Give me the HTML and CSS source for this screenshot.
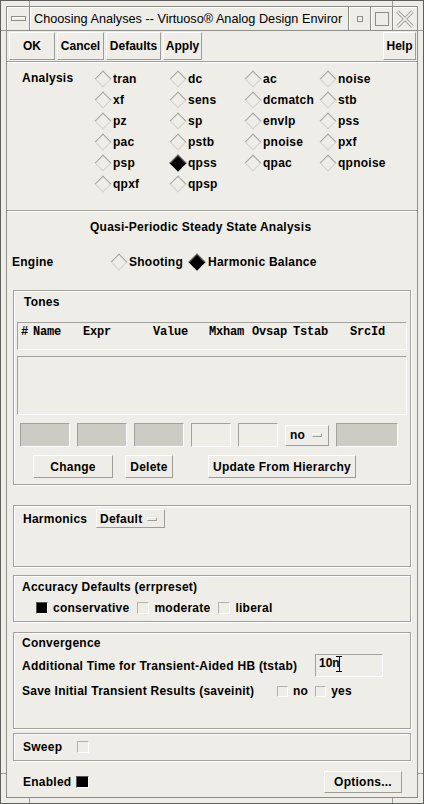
FILE: index.html
```html
<!DOCTYPE html>
<html>
<head>
<meta charset="utf-8">
<title>Choosing Analyses</title>
<link rel="stylesheet" href="styles.css">
</head>
<body>
<div class="window">
  <span class="mark mark-v m-tl"></span>
  <span class="mark mark-v m-tr"></span>
  <span class="mark mark-v m-bl"></span>
  <span class="mark mark-v m-br"></span>
  <span class="mark mark-h m-lt"></span>
  <span class="mark mark-h m-rt"></span>
  <span class="mark mark-h m-lb"></span>
  <span class="mark mark-h m-rb"></span>
  <div class="frame">
    <div class="titlebar">
      <div class="tb tb-menu"><span class="menu-bar"></span></div>
      <div class="tb tb-title">Choosing Analyses -- Virtuoso® Analog Design Enviror</div>
      <div class="tb tb-min"><span class="min-box"></span></div>
      <div class="tb tb-max"><span class="max-box"></span></div>
      <div class="tb tb-close">
        <svg width="18" height="18" viewBox="0 0 18 18">
          <path d="M1.5 1.5 L16.5 16.5 M16.5 1.5 L1.5 16.5" stroke="#a3a39e" stroke-width="3.6" fill="none"/>
          <path d="M1.5 1.5 L16.5 16.5 M16.5 1.5 L1.5 16.5" stroke="#f4f3ee" stroke-width="1.6" fill="none"/>
        </svg>
      </div>
    </div>
    <div class="client">
      <div class="actions">
        <div class="btn w-ok">OK</div>
        <div class="btn w-cancel">Cancel</div>
        <div class="btn w-defaults">Defaults</div>
        <div class="btn w-apply">Apply</div>
        <div class="btn w-help">Help</div>
      </div>

      <div class="analysis">
        <div class="an-label">Analysis</div>
        <div class="radio"><span class="dia"></span>tran</div>
        <div class="radio"><span class="dia"></span>dc</div>
        <div class="radio"><span class="dia"></span>ac</div>
        <div class="radio"><span class="dia"></span>noise</div>
        <div class="radio"><span class="dia"></span>xf</div>
        <div class="radio"><span class="dia"></span>sens</div>
        <div class="radio"><span class="dia"></span>dcmatch</div>
        <div class="radio"><span class="dia"></span>stb</div>
        <div class="radio"><span class="dia"></span>pz</div>
        <div class="radio"><span class="dia"></span>sp</div>
        <div class="radio"><span class="dia"></span>envlp</div>
        <div class="radio"><span class="dia"></span>pss</div>
        <div class="radio"><span class="dia"></span>pac</div>
        <div class="radio"><span class="dia"></span>pstb</div>
        <div class="radio"><span class="dia"></span>pnoise</div>
        <div class="radio"><span class="dia"></span>pxf</div>
        <div class="radio"><span class="dia"></span>psp</div>
        <div class="radio"><span class="dia on"></span>qpss</div>
        <div class="radio"><span class="dia"></span>qpac</div>
        <div class="radio"><span class="dia"></span>qpnoise</div>
        <div class="radio"><span class="dia"></span>qpxf</div>
        <div class="radio"><span class="dia"></span>qpsp</div>
      </div>

      <div class="qp">
        <div class="qp-title">Quasi-Periodic Steady State Analysis</div>

        <div class="engine">
          <div class="engine-label">Engine</div>
          <div class="radio"><span class="dia"></span>Shooting</div>
          <div class="radio radio-next"><span class="dia on"></span>Harmonic Balance</div>
        </div>

        <div class="group tones">
          <div class="tones-label">Tones</div>
          <div class="tbl-head">
            <span>#</span><span>Name</span><span>Expr</span><span>Value</span><span>Mxham</span><span>Ovsap</span><span>Tstab</span><span>SrcId</span>
          </div>
          <div class="tbl-list"></div>
          <div class="tbl-edit">
            <div class="field gray fw50"></div>
            <div class="field gray fw50"></div>
            <div class="field gray fw50"></div>
            <div class="field fw40"></div>
            <div class="field fw40"></div>
            <div class="btn cycle cycle-no">no<span class="ind"></span></div>
            <div class="field gray fw62"></div>
          </div>
          <div class="tbl-btns">
            <div class="btn w-change">Change</div>
            <div class="btn w-delete">Delete</div>
            <div class="btn w-update">Update From Hierarchy</div>
          </div>
        </div>

        <div class="group harm">
          <div class="harm-row">
            <div class="harm-label">Harmonics</div>
            <div class="btn cycle cycle-default">Default<span class="ind"></span></div>
          </div>
        </div>

        <div class="group acc">
          <div class="acc-label">Accuracy Defaults (errpreset)</div>
          <div class="acc-row">
            <div class="chk-item"><span class="chk on"></span>conservative</div>
            <div class="chk-item"><span class="chk"></span>moderate</div>
            <div class="chk-item"><span class="chk"></span>liberal</div>
          </div>
        </div>

        <div class="group conv">
          <div class="conv-label">Convergence</div>
          <div class="conv-row1">
            <div class="tstab-label">Additional Time for Transient-Aided HB (tstab)</div>
            <div class="tstab-input">10n<svg class="ibeam" width="7" height="16" viewBox="0 0 7 16"><path d="M0 0.5 H6 M3.5 0.5 V15.5 M0 15.5 H6" stroke="#000" stroke-width="1" fill="none"/></svg></div>
          </div>
          <div class="conv-row2">
            <div class="saveinit-label">Save Initial Transient Results (saveinit)</div>
            <div class="chk-item small"><span class="chk"></span>no</div>
            <div class="chk-item small"><span class="chk"></span>yes</div>
          </div>
        </div>

        <div class="group sweep">
          <div class="sweep-label">Sweep</div>
          <span class="chk"></span>
        </div>

        <div class="bottom">
          <div class="enabled-label">Enabled</div>
          <span class="chk on big"></span>
          <div class="btn w-options">Options...</div>
        </div>
      </div>
    </div>
  </div>
</div>
</body>
</html>
```

FILE: styles.css
```css
* { box-sizing: border-box; }

html, body {
  margin: 0;
  padding: 0;
}

body {
  width: 424px;
  height: 804px;
  overflow: hidden;
  background: #eeede7;
  color: #000;
  font-family: "Liberation Sans", Arial, sans-serif;
  font-size: 12px;
  font-weight: bold;
  line-height: 16px;
  letter-spacing: 0.25px;
}

/* ---------- window frame ---------- */
.window {
  position: relative;
  width: 424px;
  height: 804px;
  border: 1px solid #5f5f5b;
  padding: 5px;
  background: #eeede7;
}

.mark {
  position: absolute;
  background: #9d9d97;
}
.mark-v { width: 1px; height: 5px; }
.mark-h { width: 5px; height: 1px; }
.m-tl { left: 28px; top: 0; }
.m-tr { left: 391px; top: 0; }
.m-bl { left: 28px; bottom: 0; }
.m-br { left: 391px; bottom: 0; }
.m-lt { left: 0; top: 29px; }
.m-rt { right: 0; top: 29px; }
.m-lb { left: 0; top: 772px; }
.m-rb { right: 0; top: 772px; }

.frame {
  height: 100%;
  border: 1px solid #8e8e89;
  display: flex;
  flex-direction: column;
}

.titlebar {
  display: flex;
  height: 24px;
  flex: none;
  border-bottom: 1px solid #8e8e89;
}

.tb {
  height: 100%;
  flex: none;
  border-right: 1px solid #8e8e89;
  box-shadow: inset 1px 1px 0 #fff;
  display: flex;
  align-items: center;
  justify-content: center;
}

.tb-menu { width: 23px; }
.tb-title {
  width: 319px;
  justify-content: flex-start;
  padding-left: 4px;
  font-weight: normal;
  font-size: 12.7px;
  letter-spacing: 0;
  white-space: nowrap;
  overflow: hidden;
}
.tb-min, .tb-max { width: 22px; }
.tb-close { width: 24px; border-right: none; }

.menu-bar {
  width: 15px;
  height: 5px;
  border: 1px solid #8e8e89;
  box-shadow: inset 1px 1px 0 #fff;
}
.min-box {
  width: 6px;
  height: 6px;
  border: 1px solid #8e8e89;
}
.max-box {
  width: 14px;
  height: 14px;
  border: 1px solid #8e8e89;
}

/* ---------- client ---------- */
.client {
  flex: 1;
  display: flex;
  flex-direction: column;
}

.btn {
  display: flex;
  align-items: center;
  justify-content: center;
  border: 1px solid;
  border-color: #fff #9d9d97 #9d9d97 #fff;
  background: #eeede7;
  white-space: nowrap;
  flex: none;
}

.actions {
  display: flex;
  gap: 2px;
  height: 30px;
  padding: 1px 1px 0 2px;
  flex: none;
}
.actions .btn { height: 28px; letter-spacing: 0; }
.w-ok { width: 46px; }
.w-cancel { width: 47px; }
.w-defaults { width: 55px; }
.w-apply { width: 39px; }
.w-help { width: 33px; margin-left: auto; }

/* ---------- analysis grid ---------- */
.analysis {
  flex: none;
  height: 150px;
  border-top: 1px solid #a2a29c;
  border-bottom: 1px solid #a2a29c;
  box-shadow: inset 0 1px 0 #fff, 0 1px 0 #fff;
  padding: 6px 0 0 15px;
  display: grid;
  grid-template-columns: 74px repeat(4, 75px);
  grid-auto-rows: 21px;
  align-content: start;
}

.an-label {
  grid-row: 1 / span 6;
  line-height: 21px;
}

.radio {
  display: flex;
  align-items: center;
  gap: 3px;
  white-space: nowrap;
}

.dia {
  width: 14px;
  height: 14px;
  display: flex;
  align-items: center;
  justify-content: center;
  flex: none;
}
.dia::before {
  content: "";
  width: 10px;
  height: 10px;
  border: 1px solid;
  border-color: #a3a39d #d2d2cc #d2d2cc #a3a39d;
  transform: rotate(45deg);
}
.dia.on::before {
  background: #000;
  border-color: #6f6f6b #000 #000 #6f6f6b;
}

/* ---------- QPSS section ---------- */
.qp {
  flex: 1;
  display: flex;
  flex-direction: column;
}

.qp-title {
  margin-top: 8px;
  height: 16px;
  padding-left: 83px;
}

.engine {
  margin-top: 19px;
  height: 16px;
  display: flex;
  align-items: center;
  padding-left: 5px;
}
.engine-label { width: 100px; }
.radio-next { margin-left: 7px; gap: 4px; }

.group {
  flex: none;
  margin: 0 6px;
  border: 1px solid #a2a29c;
  box-shadow: inset 1px 1px 0 #fff, 1px 1px 0 #fff;
}

/* tones */
.tones {
  margin-top: 20px;
  height: 195px;
}
.tones-label {
  margin: 3px 0 0 10px;
  height: 16px;
}

.tbl-head {
  margin: 12px 3px 0 3px;
  height: 28px;
  border: 1px solid;
  border-color: #a2a29c #fff #fff #a2a29c;
  padding: 1px 0 0 3px;
  display: grid;
  grid-template-columns: 12px 50px 70px 56px 43px 41px 57px auto;
  align-items: start;
  font-family: "Liberation Mono", "DejaVu Sans Mono", monospace;
  font-size: 12px;
  letter-spacing: -0.2px;
}

.tbl-list {
  margin: 6px 3px 0 3px;
  height: 59px;
  border: 1px solid;
  border-color: #a2a29c #fff #fff #a2a29c;
}

.tbl-edit {
  display: flex;
  align-items: center;
  gap: 7px;
  margin-top: 8px;
  height: 24px;
  padding-left: 6px;
}

.field {
  height: 24px;
  flex: none;
  border: 1px solid;
  border-color: #a2a29c #fff #fff #a2a29c;
}
.field.gray { background: #cccbc4; }
.fw50 { width: 50px; }
.fw40 { width: 40px; }
.fw62 { width: 62px; }

.cycle {
  justify-content: flex-start;
}
.ind {
  width: 10px;
  height: 4px;
  border: 1px solid;
  border-color: #fff #9d9d97 #9d9d97 #fff;
}
.cycle-no {
  width: 44px;
  height: 21px;
  padding-left: 4px;
  gap: 7px;
}
.cycle-default {
  width: 69px;
  height: 19px;
  padding-left: 3px;
  gap: 5px;
}

.tbl-btns {
  display: flex;
  margin-top: 8px;
  height: 24px;
  padding-left: 19px;
}
.tbl-btns .btn { height: 23px; }
.w-change { width: 80px; }
.w-delete { width: 48px; margin-left: 12px; }
.w-update { width: 148px; margin-left: 35px; }

/* harmonics */
.harm {
  margin-top: 20px;
  height: 62px;
}
.harm-row {
  display: flex;
  align-items: center;
  margin: 3px 0 0 9px;
  height: 19px;
}
.harm-label { width: 73px; }

/* accuracy */
.acc {
  margin-top: 8px;
  height: 47px;
}
.acc-label {
  margin: 3px 0 0 8px;
  height: 16px;
}
.acc-row {
  display: flex;
  align-items: center;
  margin: 5px 0 0 22px;
  height: 16px;
}

.chk-item {
  display: flex;
  align-items: center;
  gap: 5px;
  white-space: nowrap;
}
.chk-item + .chk-item { margin-left: 8px; }
.chk-item.small + .chk-item.small { margin-left: 7px; }

.chk {
  width: 12px;
  height: 12px;
  flex: none;
  border: 1px solid;
  border-color: #b2b2ac #fff #fff #b2b2ac;
}
.chk.on {
  background: #000;
  border-color: #555 #fff #fff #555;
}
.chk-item.small .chk { width: 11px; height: 11px; }

/* convergence */
.conv {
  margin-top: 10px;
  height: 97px;
}
.conv-label {
  margin: 2px 0 0 8px;
  height: 16px;
}
.conv-row1 {
  display: flex;
  align-items: center;
  margin: 3px 0 0 8px;
  height: 23px;
}
.tstab-label {
  width: 293px;
  white-space: nowrap;
}
.tstab-input {
  position: relative;
  width: 68px;
  height: 23px;
  border: 1px solid;
  border-color: #a2a29c #fff #fff #a2a29c;
  padding: 0 0 0 3px;
  line-height: 16px;
  letter-spacing: 0;
}
.ibeam {
  position: absolute;
  left: 20px;
  top: 1px;
}
.conv-row2 {
  display: flex;
  align-items: center;
  margin: 6px 0 0 8px;
  height: 16px;
}
.saveinit-label {
  width: 255px;
  white-space: nowrap;
}

/* sweep */
.sweep {
  margin-top: 4px;
  height: 28px;
  display: flex;
  align-items: center;
  padding-left: 9px;
}
.sweep-label { width: 54px; }
.sweep .chk { width: 12px; height: 12px; }

/* bottom */
.bottom {
  flex: none;
  margin-top: 10px;
  height: 22px;
  display: flex;
  align-items: center;
  padding: 0 15px 0 16px;
}
.enabled-label { width: 53px; }
.chk.big { width: 13px; height: 12px; }
.w-options {
  width: 78px;
  height: 22px;
  margin-left: auto;
}
```
